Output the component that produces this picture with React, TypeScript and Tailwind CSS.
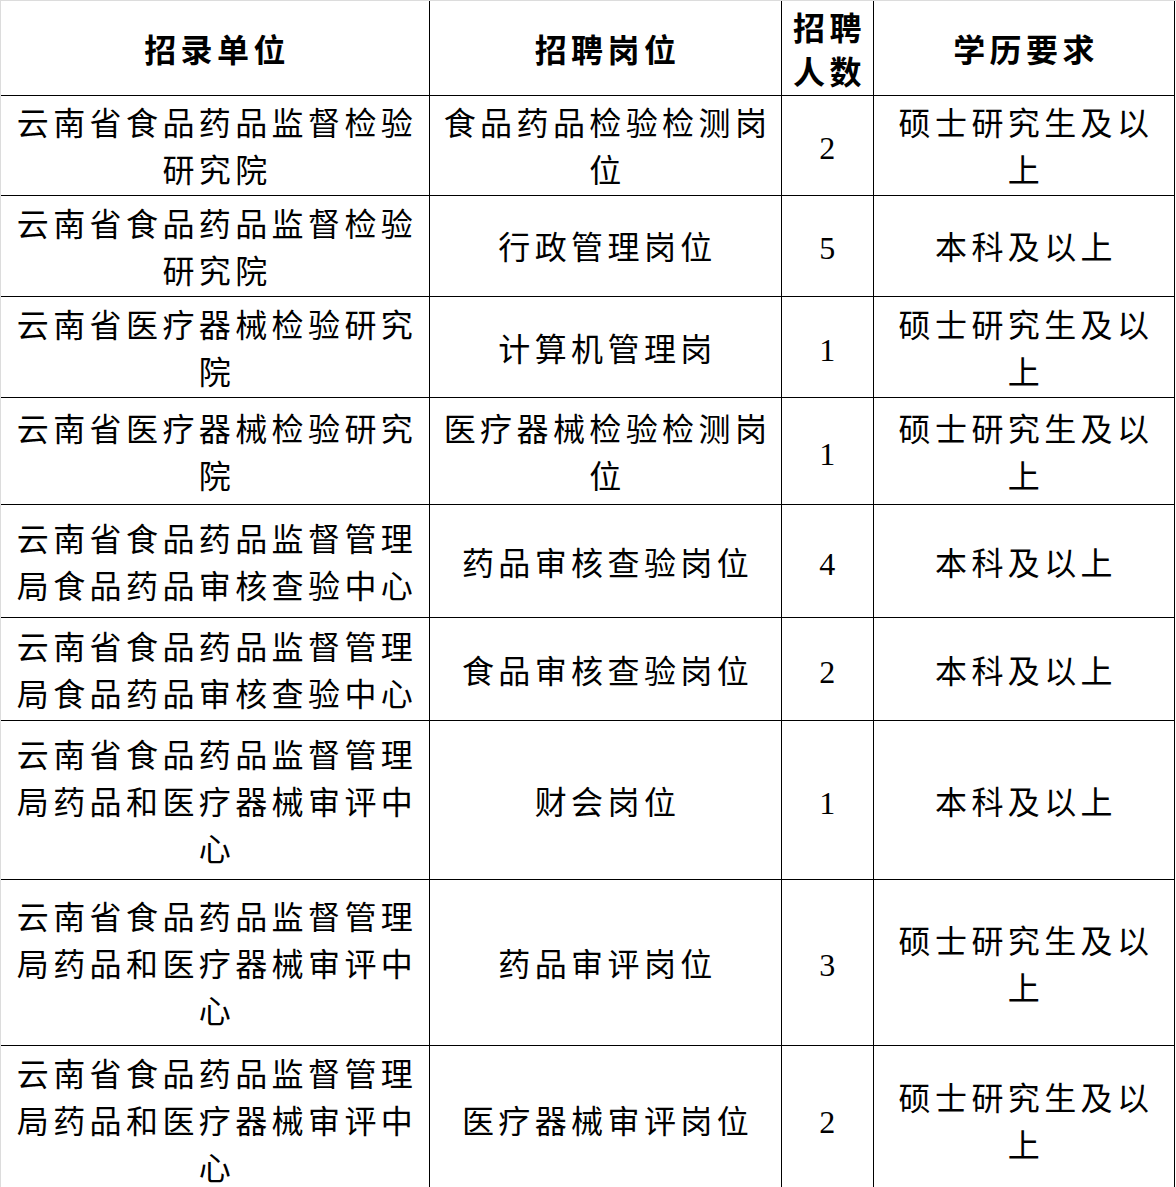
type Row = {
  unit: string;
  post: string;
  count: string;
  edu: string;
  h: string;
};

const rows: Row[] = [
  { unit: "云南省食品药品监督检验研究院", post: "食品药品检验检测岗位", count: "2", edu: "硕士研究生及以上", h: "h-[100px]" },
  { unit: "云南省食品药品监督检验研究院", post: "行政管理岗位", count: "5", edu: "本科及以上", h: "h-[102px]" },
  { unit: "云南省医疗器械检验研究院", post: "计算机管理岗", count: "1", edu: "硕士研究生及以上", h: "h-[101px]" },
  { unit: "云南省医疗器械检验研究院", post: "医疗器械检验检测岗位", count: "1", edu: "硕士研究生及以上", h: "h-[107px]" },
  { unit: "云南省食品药品监督管理局食品药品审核查验中心", post: "药品审核查验岗位", count: "4", edu: "本科及以上", h: "h-[113px]" },
  { unit: "云南省食品药品监督管理局食品药品审核查验中心", post: "食品审核查验岗位", count: "2", edu: "本科及以上", h: "h-[103px]" },
  { unit: "云南省食品药品监督管理局药品和医疗器械审评中心", post: "财会岗位", count: "1", edu: "本科及以上", h: "h-[159px]" },
  { unit: "云南省食品药品监督管理局药品和医疗器械审评中心", post: "药品审评岗位", count: "3", edu: "硕士研究生及以上", h: "h-[166px]" },
  { unit: "云南省食品药品监督管理局药品和医疗器械审评中心", post: "医疗器械审评岗位", count: "2", edu: "硕士研究生及以上", h: "h-[141px]" },
];

const cols = "grid grid-cols-[429px_352px_92px_301px]";
// letter-spacing leaves a trailing gap, so pad a little more on the left
const cell =
  "flex items-center justify-center border-r border-b border-black pl-[10px] pr-[6px] pt-[6px] text-center";

export default function App() {
  return (
    <div
      className="w-[1176px] bg-white text-black text-[32px] tracking-[4.4px] leading-[47px]"
      style={{ fontFamily: '"Liberation Serif", "Noto Sans CJK SC", serif' }}
    >
      <div className="border-t border-l border-[#dcdcdc]">
        {/* header */}
        <div className={`${cols} h-[94px] font-bold`}>
          <div className={cell}>招录单位</div>
          <div className={cell}>招聘岗位</div>
          <div className={`${cell} leading-[44px]`}>招聘人数</div>
          <div className={cell}>学历要求</div>
        </div>

        {rows.map((r, i) => (
          <div key={i} className={`${cols} ${r.h}`}>
            <div className={cell}>{r.unit}</div>
            <div className={cell}>{r.post}</div>
            <div className={cell}>{r.count}</div>
            <div className={cell}>{r.edu}</div>
          </div>
        ))}
      </div>
    </div>
  );
}
